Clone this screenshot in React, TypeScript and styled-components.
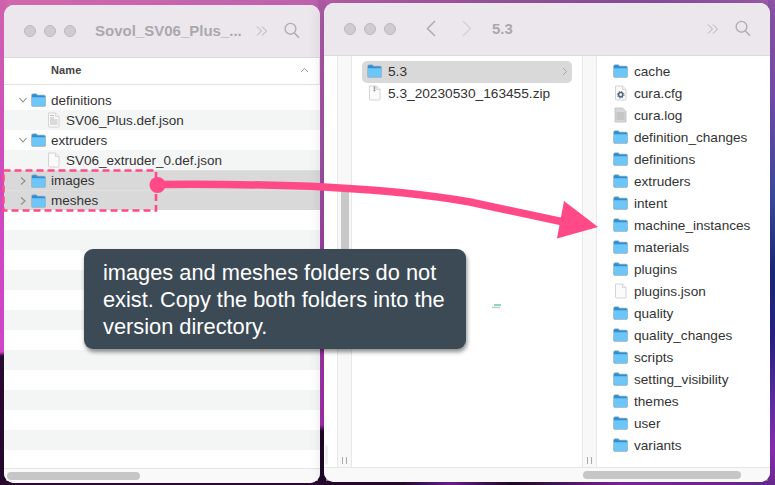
import React from "react";
import styled, { createGlobalStyle } from "styled-components";

const Global = createGlobalStyle`
  * { box-sizing: border-box; }
  html, body { margin: 0; padding: 0; overflow: hidden; background: #2a0a30; }
`;

const Desktop = styled.div`
  position: relative;
  width: 775px;
  height: 485px;
  overflow: hidden;
  display: flex;
  align-items: flex-start;
  gap: 4px;
  padding-left: 4px;
  font-family: "Liberation Sans", Arial, sans-serif;
  background:
    linear-gradient(90deg, #2a0a30 0, #2a0a30 52%, #6e2094 58%, #22082a 66%, #8028a0 80%, #6a2a90 100%) 0 481px / 100% 4px no-repeat,
    linear-gradient(180deg, #8f55a8 0, #7a4faf 90px, #3a4da0 200px, #1a2a7a 270px, #2a2388 340px, #6030a8 400px, #8a30b8 450px, #702a90 485px) 768px 0 / 7px 100% no-repeat,
    linear-gradient(180deg, #b05ca8 0, #a050a8 170px, #9a35a0 300px, #a030ac 425px, #1e0828 431px, #1e0828 485px) 318px 0 / 8px 100% no-repeat,
    linear-gradient(180deg, #cf62ae 0, #d048c0 180px, #d044c8 352px, #2a0a30 356px, #22082c 485px) 0 0 / 6px 100% no-repeat,
    linear-gradient(90deg, #d268ac 0, #bd62ad 40%, #9c569f 65%, #8f4fa2 85%, #a060b0 100%);
`;

const Window = styled.section<{ $top: number; $width: number; $height: number; $front?: boolean }>`
  position: relative;
  z-index: ${(p) => (p.$front ? 2 : 1)};
  margin-top: ${(p) => p.$top}px;
  width: ${(p) => p.$width}px;
  height: ${(p) => p.$height}px;
  flex: none;
  display: flex;
  flex-direction: column;
  border-radius: 10px;
  overflow: hidden;
  background: #fff;
  box-shadow: ${(p) => (p.$front ? "0 0 16px rgba(0,0,0,.16)" : "none")};
`;

const TitleBar = styled.header`
  height: 53px;
  flex: none;
  display: flex;
  align-items: center;
  padding: 0 0 1px 20px;
  background: #ece7ec;
  border-bottom: 1px solid #dcd9dc;
`;

const Lights = styled.div`
  display: flex;
  gap: 8px;
`;

const Light = styled.span`
  width: 12px;
  height: 12px;
  border-radius: 50%;
  background: #cfccd0;
  border: 1px solid #bcb9bd;
`;

const Title = styled.h1<{ $left: number; $width: number }>`
  margin: 0 0 0 ${(p) => p.$left}px;
  width: ${(p) => p.$width}px;
  flex: none;
  font-size: 15px;
  font-weight: 700;
  color: #aba8ac;
  white-space: nowrap;
`;

const ToolIcon = styled.svg<{ $left: number }>`
  flex: none;
  margin-left: ${(p) => p.$left}px;
  fill: none;
  stroke: #b0adb1;
  stroke-width: 1.4;
`;

const ColumnHeader = styled.div`
  height: 27px;
  flex: none;
  display: flex;
  align-items: center;
  justify-content: space-between;
  padding: 0 10px 3px 47px;
  border-bottom: 1px solid #e2e2e2;
  border-right: 1px solid #ececec;
  font-size: 11px;
  font-weight: 700;
  letter-spacing: 0.1px;
  color: #444;
`;

const TreeList = styled.div`
  flex: 1;
  min-height: 0;
  overflow: hidden;
  padding-top: 5px;
`;

const TreeRow = styled.div<{ $tone?: "stripe" | "selected" }>`
  height: 20px;
  display: flex;
  align-items: center;
  font-size: 13.5px;
  color: #333;
  background: ${(p) =>
    p.$tone === "stripe" ? "#f4f5f5" : p.$tone === "selected" ? "#d9d9d9" : "#fff"};
  border-top: ${(p) => (p.$tone === "selected" ? "1px solid #dfdfdf" : "none")};
`;

const Disclosure = styled.svg`
  flex: none;
  width: 8px;
  height: 8px;
  margin: 0 4px 0 15px;
  fill: none;
  stroke: #8c8c8c;
  stroke-width: 1.1;
`;

const ChildIndent = styled.span`
  width: 42px;
  flex: none;
`;

const Label = styled.span<{ $left: number }>`
  margin-left: ${(p) => p.$left}px;
  white-space: nowrap;
`;

const Footer = styled.footer`
  height: 15px;
  flex: none;
  background: #f9f9f9;
  border-top: 1px solid #e6e6e6;
  display: flex;
  align-items: center;
`;

const ScrollThumb = styled.div<{ $left: number; $width: number }>`
  margin-left: ${(p) => p.$left}px;
  width: ${(p) => p.$width}px;
  height: 8px;
  border-radius: 4px;
  background: #c6c6c6;
`;

const Browser = styled.div`
  flex: 1;
  min-height: 0;
  display: flex;
`;

const EdgeColumn = styled.div`
  width: 13px;
  flex: none;
  display: flex;
  align-items: flex-end;
  padding-bottom: 2px;
`;

const EdgeTab = styled.span`
  width: 3px;
  height: 20px;
  margin-left: 1px;
  background: #f0f0f0;
  border-radius: 0 3px 3px 0;
`;

const Gutter = styled.div`
  width: 15px;
  flex: none;
  display: flex;
  flex-direction: column;
  align-items: center;
  background: #f8f8f8;
  border-left: 1px solid #e8e8e8;
  border-right: 1px solid #e8e8e8;
`;

const VerticalThumb = styled.div`
  width: 8px;
  height: 110px;
  margin-top: 133px;
  background: #c8c8c8;
`;

const Grip = styled.div`
  margin-top: auto;
  margin-bottom: 3px;
  width: 5px;
  height: 7px;
  border-left: 1px solid #aaa;
  border-right: 1px solid #aaa;
`;

const MiddleColumn = styled.div`
  width: 230px;
  flex: none;
  padding: 5px 10px 0;
`;

const ListColumn = styled.div`
  flex: 1;
  padding: 4px 0 0 16px;
`;

const BrowserRow = styled.div<{ $selected?: boolean }>`
  height: 22px;
  display: flex;
  align-items: center;
  gap: 6px;
  padding: 0 0 2px 5px;
  font-size: 13.7px;
  color: #333;
  border-radius: 5px;
  background: ${(p) => (p.$selected ? "#d9d9d9" : "transparent")};
  white-space: nowrap;
`;

const ListRow = styled.div`
  height: 22px;
  display: flex;
  align-items: center;
  gap: 6px;
  font-size: 13.6px;
  color: #333;
  white-space: nowrap;
`;

const RowCaret = styled.svg`
  margin-left: auto;
  margin-right: 4px;
  width: 7px;
  height: 9px;
  fill: none;
  stroke: #a5a5a5;
  stroke-width: 1;
`;

const IconSvg = styled.svg`
  flex: none;
  display: block;
`;

const Annotation = styled.svg`
  position: absolute;
  z-index: 3;
  left: 0;
  top: 0;
  pointer-events: none;
`;

const Callout = styled.aside`
  position: absolute;
  z-index: 4;
  left: 84px;
  top: 249px;
  width: 382px;
  height: 100px;
  padding: 10px 19px;
  border-radius: 9px;
  background: #3b4a55;
  box-shadow: 1px 3px 4px rgba(0, 0, 0, 0.45);
  color: #fff;
  font-size: 21.8px;
  line-height: 27px;
`;

const Folder = () => (
  <IconSvg width="15" height="14" viewBox="0 0 15 14">
    <path d="M0.5 2.5Q0.5 0.7 2 0.7H5.2L6.7 2.1H13Q14.6 2.1 14.6 3.6V12Q14.6 13.5 13 13.5H2Q0.5 13.5 0.5 12Z" fill="#2f8fd2" stroke="#b3bcc4" strokeWidth="0.7" />
    <path d="M1 4.2H14.1V12Q14.1 13 13 13H2Q1 13 1 12Z" fill="#6cc6f8" />
  </IconSvg>
);

const PageShape = ({ children }: { children?: React.ReactNode }) => (
  <IconSvg width="15" height="16" viewBox="0 0 15 16">
    <path d="M2.5 1H9.5L13 4.5V14Q13 15 12 15H3.5Q2.5 15 2.5 14Z" fill="#fbfbfb" stroke="#cfcfcf" strokeWidth="0.9" />
    <path d="M9.5 1V4.5H13" fill="#efefef" stroke="#cfcfcf" strokeWidth="0.8" />
    {children}
  </IconSvg>
);

const DocFile = () => (
  <PageShape>
    <path d="M4 3.5H8M4 6H8M4 8H11.5M4 10H11.5M4 12H11.5" stroke="#b8b8b8" strokeWidth="1" />
  </PageShape>
);

const LogFile = () => (
  <IconSvg width="15" height="16" viewBox="0 0 15 16">
    <path d="M2 1H9.5L13 4.5V15H2Z" fill="#d7d7d7" stroke="#bdbdbd" strokeWidth="0.8" />
    <path d="M3.5 6H11.5M3.5 8H11.5M3.5 10H11.5M3.5 12H11.5" stroke="#ababab" strokeWidth="0.8" />
  </IconSvg>
);

const ConfigFile = () => (
  <PageShape>
    <circle cx="7.7" cy="9.7" r="2.1" fill="none" stroke="#51687c" strokeWidth="1.5" />
    <circle cx="7.7" cy="9.7" r="3.3" fill="none" stroke="#51687c" strokeWidth="1" strokeDasharray="1.3 1.3" />
  </PageShape>
);

const ZipFile = () => (
  <PageShape>
    <path d="M7.5 1.5V7" stroke="#777" strokeWidth="1.6" strokeDasharray="1.2 0.6" />
  </PageShape>
);

const BlankFile = () => <PageShape />;

const Search = ({ left }: { left: number }) => (
  <ToolIcon $left={left} width="16" height="17" viewBox="0 0 16 17">
    <circle cx="6.5" cy="6.8" r="5.4" />
    <path d="M10.4 11L15 15.8" strokeWidth="1.6" />
  </ToolIcon>
);

const More = ({ left }: { left: number }) => (
  <ToolIcon $left={left} width="12" height="10" viewBox="0 0 12 10" style={{ strokeWidth: 1 }}>
    <path d="M1 0.5L5.500 5L1 9.5M6 0.5L10.500 5L6 9.5" />
  </ToolIcon>
);

const Open = () => (
  <Disclosure viewBox="0 0 8 8">
    <path d="M0.5 2L4 6L7.5 2" />
  </Disclosure>
);
const Closed = () => (
  <Disclosure viewBox="0 0 8 8">
    <path d="M2 0.5L6 4L2 7.5" />
  </Disclosure>
);

const emptyRows = Array.from({ length: 13 }, (_, i) => i);

type Entry = { name: string; kind?: "cfg" | "log" | "blank" };
const entries: Entry[] = [
  { name: "cache" },
  { name: "cura.cfg", kind: "cfg" },
  { name: "cura.log", kind: "log" },
  { name: "definition_changes" },
  { name: "definitions" },
  { name: "extruders" },
  { name: "intent" },
  { name: "machine_instances" },
  { name: "materials" },
  { name: "plugins" },
  { name: "plugins.json", kind: "blank" },
  { name: "quality" },
  { name: "quality_changes" },
  { name: "scripts" },
  { name: "setting_visibility" },
  { name: "themes" },
  { name: "user" },
  { name: "variants" },
];

const EntryIcon = ({ kind }: { kind?: Entry["kind"] }) => {
  if (kind === "cfg") return <ConfigFile />;
  if (kind === "log") return <LogFile />;
  if (kind === "blank") return <BlankFile />;
  return <Folder />;
};

export default function App() {
  return (
    <Desktop>
      <Global />
      <Window $top={5} $width={316} $height={478}>
        <TitleBar>
          <Lights>
            <Light />
            <Light />
            <Light />
          </Lights>
          <Title $left={19} $width={147}>
            Sovol_SV06_Plus_...
          </Title>
          <More left={14} />
          <Search left={16} />
        </TitleBar>
        <ColumnHeader>
          Name
          <svg width="9" height="6" viewBox="0 0 9 6" fill="none" stroke="#9a9a9a" strokeWidth="1">
            <path d="M1 5L4.5 1.5L8 5" />
          </svg>
        </ColumnHeader>
        <TreeList>
          <TreeRow>
            <Open />
            <Folder />
            <Label $left={5}>definitions</Label>
          </TreeRow>
          <TreeRow $tone="stripe">
            <ChildIndent />
            <DocFile />
            <Label $left={5}>SV06_Plus.def.json</Label>
          </TreeRow>
          <TreeRow>
            <Open />
            <Folder />
            <Label $left={5}>extruders</Label>
          </TreeRow>
          <TreeRow $tone="stripe">
            <ChildIndent />
            <BlankFile />
            <Label $left={5}>SV06_extruder_0.def.json</Label>
          </TreeRow>
          <TreeRow $tone="selected">
            <Closed />
            <Folder />
            <Label $left={5}>images</Label>
          </TreeRow>
          <TreeRow $tone="selected">
            <Closed />
            <Folder />
            <Label $left={5}>meshes</Label>
          </TreeRow>
          {emptyRows.map((i) => (
            <TreeRow key={i} $tone={i % 2 === 1 ? "stripe" : undefined} />
          ))}
        </TreeList>
        <Footer>
          <ScrollThumb $left={3} $width={133} />
        </Footer>
      </Window>

      <Window $front $top={3} $width={446} $height={479}>
        <TitleBar>
          <Lights>
            <Light />
            <Light />
            <Light />
          </Lights>
          <ToolIcon $left={30} width="10" height="17" viewBox="0 0 10 17">
            <path d="M9 1L1.5 8.5L9 16" strokeWidth="1.6" />
          </ToolIcon>
          <ToolIcon $left={26} width="10" height="17" viewBox="0 0 10 17" style={{ stroke: "#d6d3d7" }}>
            <path d="M1 1L8.5 8.5L1 16" strokeWidth="1.5" />
          </ToolIcon>
          <Title $left={20} $width={216}>
            5.3
          </Title>
          <More left={-1} />
          <Search left={16} />
        </TitleBar>
        <Browser>
          <EdgeColumn>
            <EdgeTab />
          </EdgeColumn>
          <Gutter>
            <VerticalThumb />
            <Grip />
          </Gutter>
          <MiddleColumn>
            <BrowserRow $selected>
              <Folder />
              5.3
              <RowCaret viewBox="0 0 7 9">
                <path d="M2 1L5.5 4.5L2 8" />
              </RowCaret>
            </BrowserRow>
            <BrowserRow>
              <ZipFile />
              5.3_20230530_163455.zip
            </BrowserRow>
          </MiddleColumn>
          <Gutter>
            <Grip />
          </Gutter>
          <ListColumn>
            {entries.map((e) => (
              <ListRow key={e.name}>
                <EntryIcon kind={e.kind} />
                {e.name}
              </ListRow>
            ))}
          </ListColumn>
        </Browser>
        <Footer>
          <ScrollThumb $left={259} $width={158} />
        </Footer>
      </Window>

      <Annotation width="775" height="485" viewBox="0 0 775 485">
        <rect x="3.5" y="170.5" width="152.5" height="40" fill="none" stroke="#ff4a87" strokeWidth="2.6" strokeDasharray="7 4" />
        <circle cx="157.5" cy="185" r="8" fill="#ff4a87" />
        <path d="M157 184.5C280 183.5 385 187 470 202L566 222.5" fill="none" stroke="#ff4a87" strokeWidth="7.5" />
        <path d="M564 201L598 227L557 238.500Z" fill="#ff4a87" />
        <path d="M494 305H501" stroke="#1aa58e" strokeWidth="1" />
        <path d="M492 307.500H500" stroke="#c9c9c9" strokeWidth="1.5" />
      </Annotation>

      <Callout>
        images and meshes folders do not exist. Copy the both folders into the version directory.
      </Callout>
    </Desktop>
  );
}
